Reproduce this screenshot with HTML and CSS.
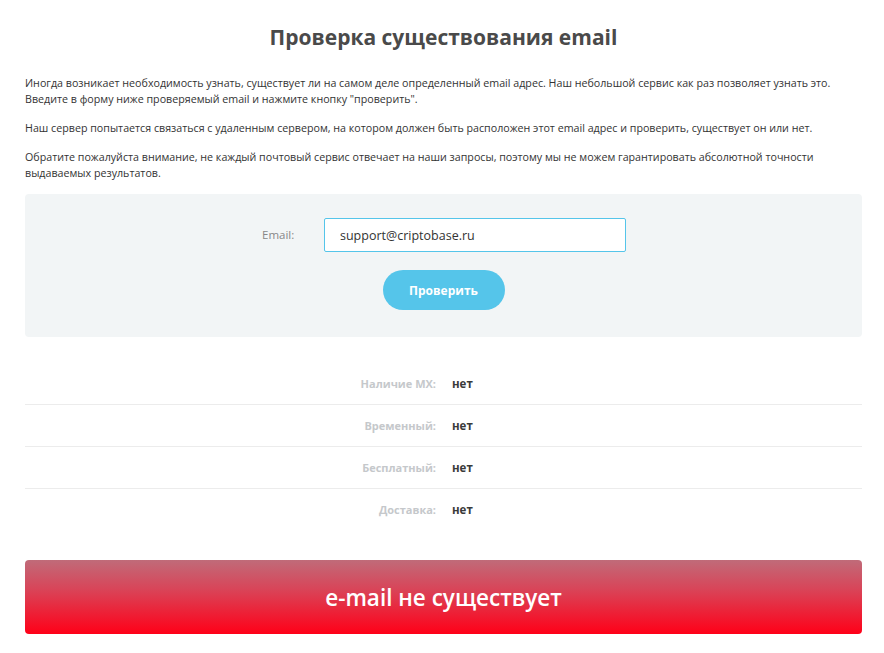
FILE: index.html
```html
<!DOCTYPE html>
<html lang="ru">
<head>
    <meta charset="UTF-8">
    <meta name="viewport" content="width=device-width, initial-scale=1.0">
    <title>Проверка существования email</title>
    <link rel="stylesheet" href="styles.css">
</head>
<body>
    <div class="container">
        <h1>Проверка существования email</h1>

        <div class="intro">
            <p>Иногда возникает необходимость узнать, существует ли на самом деле определенный email адрес. Наш небольшой сервис как раз позволяет узнать это.<br>Введите в форму ниже проверяемый email и нажмите кнопку "проверить".</p>
            <p>Наш сервер попытается связаться с удаленным сервером, на котором должен быть расположен этот email адрес и проверить, существует он или нет.</p>
            <p>Обратите пожалуйста внимание, не каждый почтовый сервис отвечает на наши запросы, поэтому мы не можем гарантировать абсолютной точности выдаваемых результатов.</p>
        </div>

        <form class="check-form" onsubmit="return false">
            <div class="form-row">
                <label for="email">Email:</label>
                <input type="text" id="email" value="support@criptobase.ru" autocomplete="off">
            </div>
            <button class="btn-check" type="submit">Проверить</button>
        </form>

        <div class="results">
            <div class="result-row">
                <span class="result-label">Наличие MX:</span>
                <span class="result-value">нет</span>
            </div>
            <div class="result-row">
                <span class="result-label">Временный:</span>
                <span class="result-value">нет</span>
            </div>
            <div class="result-row">
                <span class="result-label">Бесплатный:</span>
                <span class="result-value">нет</span>
            </div>
            <div class="result-row">
                <span class="result-label">Доставка:</span>
                <span class="result-value">нет</span>
            </div>
        </div>

        <div class="verdict">e-mail не существует</div>
    </div>
</body>
</html>
```

FILE: styles.css
```css
:root {
    --heading-color: #4a4a4a;
    --text-color: #333333;
    --muted-color: #888888;
    --label-color: #c5c8cb;
    --box-bg: #f2f5f6;
    --accent: #55c5ea;
    --line-color: #ececec;
}

body {
    margin: 0;
    background: #ffffff;
    color: var(--text-color);
    font-family: "Open Sans", "Liberation Sans", sans-serif;
}

.container {
    width: 837px;
    margin: 0 0 0 25px;
    padding-top: 22px;
}

h1 {
    margin: 0 0 23px;
    text-align: center;
    font-size: 21px;
    font-weight: 700;
    color: var(--heading-color);
    line-height: 30px;
}

.intro p {
    margin: 0 0 13px;
    font-size: 10.7px;
    line-height: 16px;
}

.check-form {
    margin-top: 13px;
    background: var(--box-bg);
    border-radius: 4px;
    padding: 24px 0 27px;
    display: flex;
    flex-direction: column;
    align-items: center;
}

.form-row {
    display: flex;
    align-items: center;
    margin-left: 1px;
}

label {
    width: 62px;
    font-size: 11.5px;
    color: var(--muted-color);
    padding-bottom: 2px;
}

input {
    width: 302px;
    height: 34px;
    box-sizing: border-box;
    padding: 0 15px;
    border: 1px solid var(--accent);
    border-radius: 2px;
    background: #ffffff;
    font-family: inherit;
    font-size: 12.5px;
    color: var(--text-color);
    outline: none;
}

.btn-check {
    margin-top: 18px;
    width: 122px;
    height: 40px;
    border: none;
    border-radius: 20px;
    background: var(--accent);
    color: #ffffff;
    font-family: inherit;
    font-size: 12px;
    font-weight: 700;
    cursor: pointer;
}

.results {
    margin-top: 26px;
}

.result-row {
    display: flex;
    align-items: center;
    height: 41px;
    border-bottom: 1px solid var(--line-color);
}

.result-row:last-child {
    border-bottom: none;
}

.result-label {
    width: 411px;
    text-align: right;
    font-size: 11px;
    font-weight: 700;
    color: var(--label-color);
}

.result-value {
    margin-left: 16px;
    font-size: 11.5px;
    font-weight: 700;
    color: #3a3a3a;
}

.verdict {
    margin-top: 30px;
    height: 74px;
    border-radius: 4px;
    background: linear-gradient(to bottom, #c06b79, #d94458 40%, #ff0018);
    color: #ffffff;
    display: flex;
    align-items: center;
    justify-content: center;
    font-size: 22.5px;
    font-weight: 600;
}
```
